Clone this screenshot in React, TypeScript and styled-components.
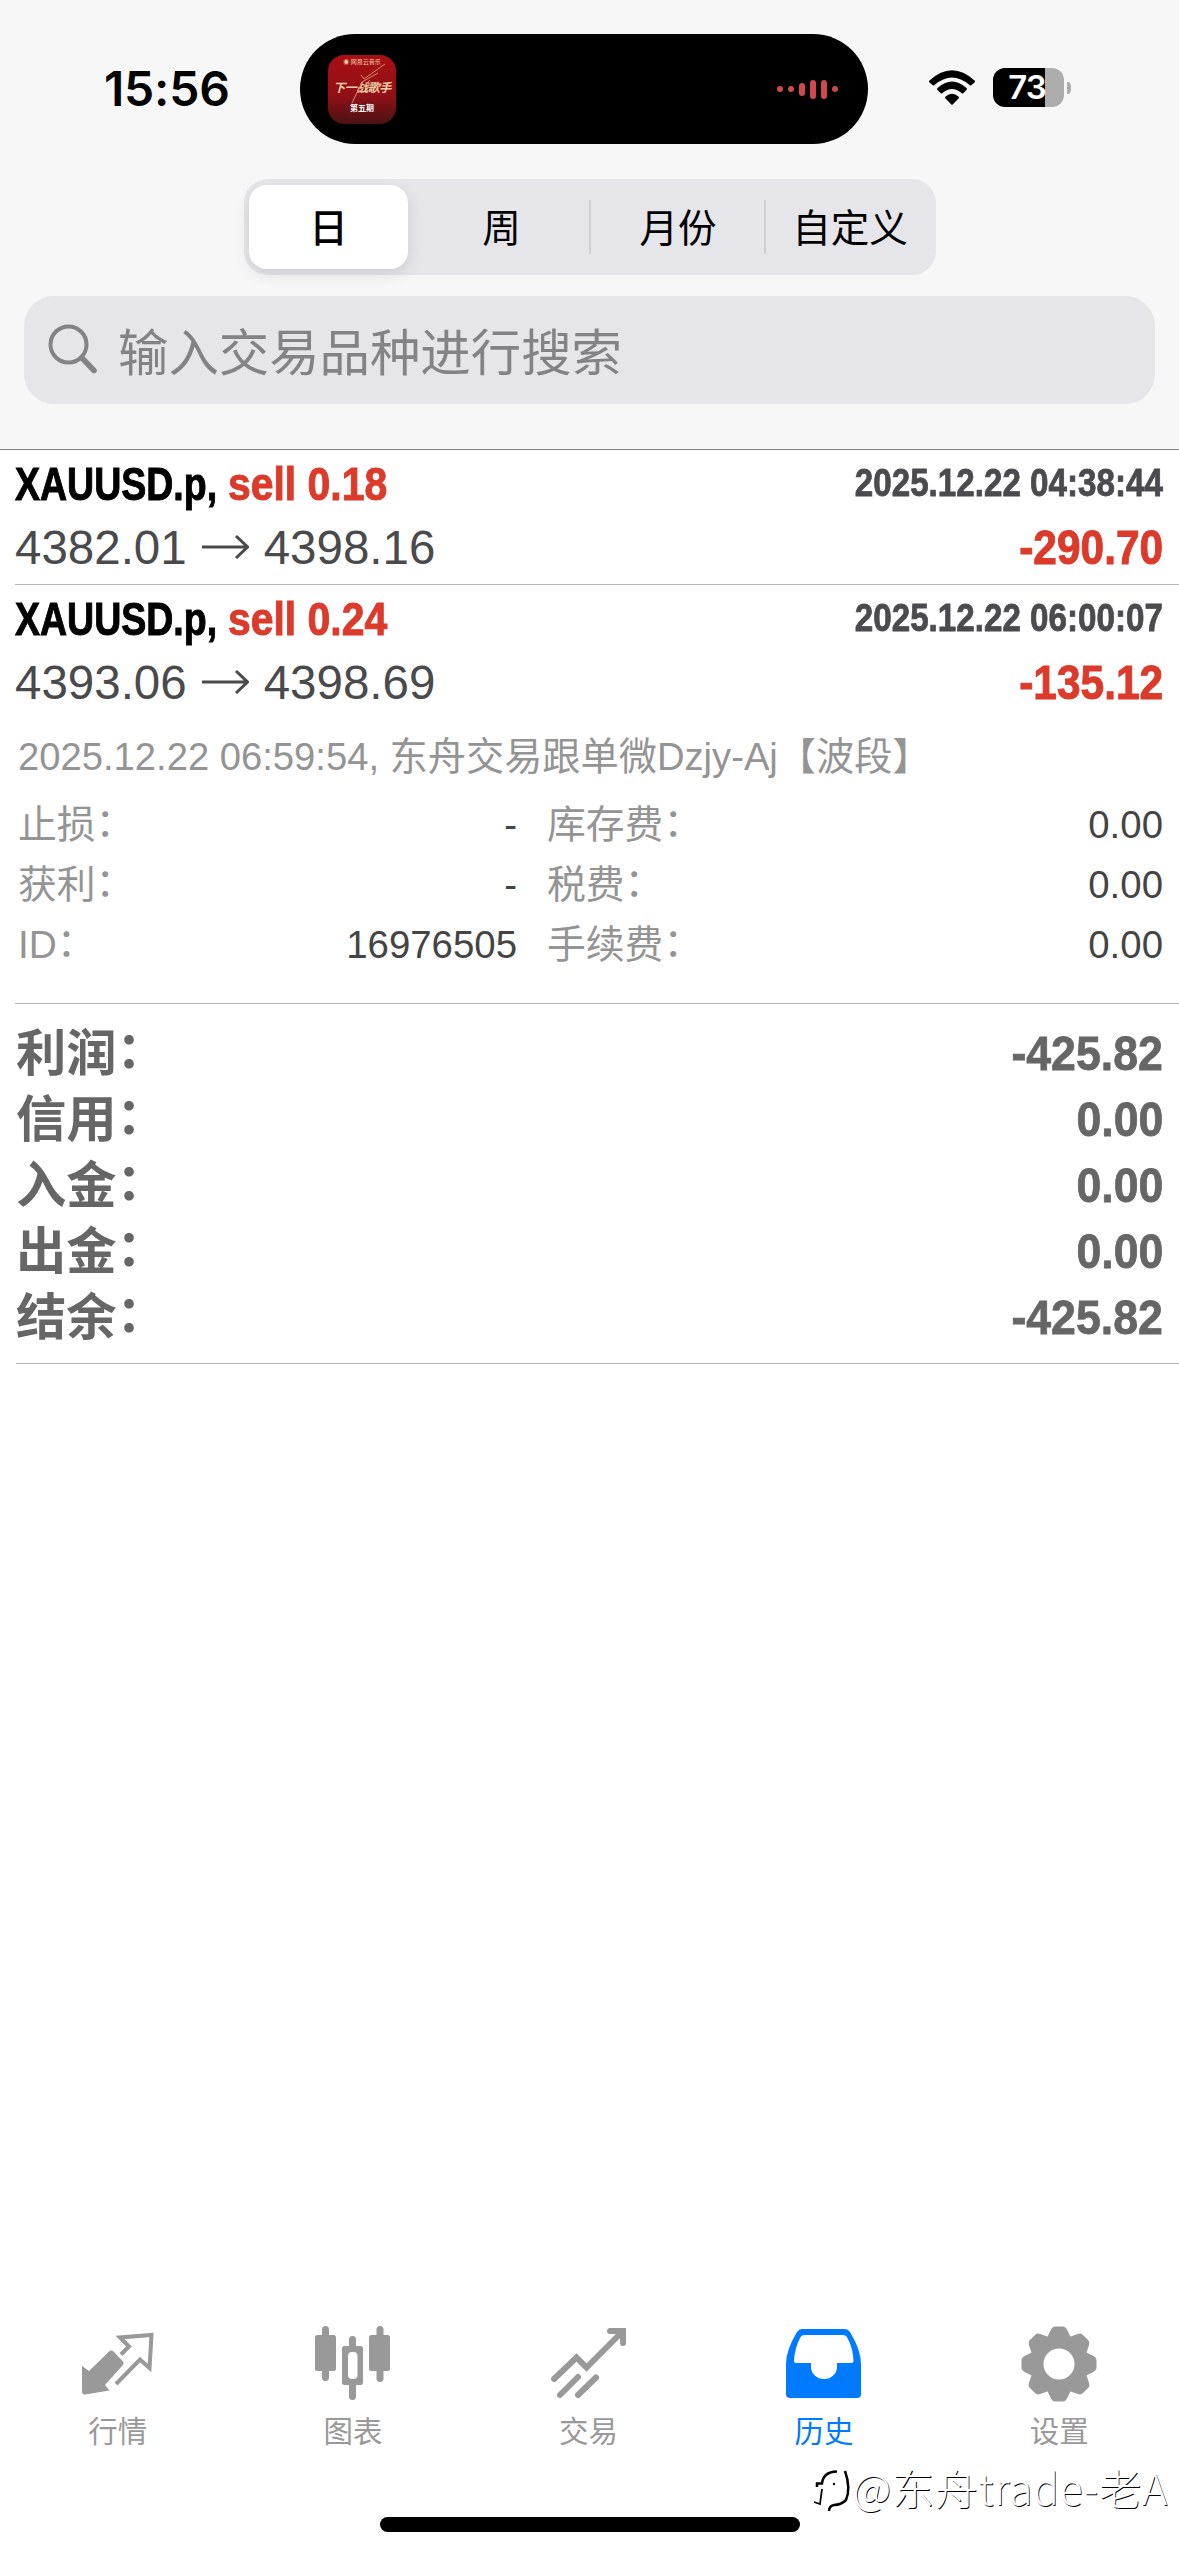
import React from "react";
import styled, { createGlobalStyle } from "styled-components";

const periods = ["日", "周", "月份", "自定义"];

const deals = [
  {
    symbol: "XAUUSD.p,",
    action: "sell 0.18",
    open: "4382.01",
    close: "4398.16",
    time: "2025.12.22 04:38:44",
    profit: "-290.70",
  },
  {
    symbol: "XAUUSD.p,",
    action: "sell 0.24",
    open: "4393.06",
    close: "4398.69",
    time: "2025.12.22 06:00:07",
    profit: "-135.12",
  },
];

const details = [
  ["止损", "-", "库存费", "0.00"],
  ["获利", "-", "税费", "0.00"],
  ["ID", "16976505", "手续费", "0.00"],
];

const totals = [
  ["利润", "-425.82"],
  ["信用", "0.00"],
  ["入金", "0.00"],
  ["出金", "0.00"],
  ["结余", "-425.82"],
];

const QuotesIcon = () => (
  <svg width="76" height="76" viewBox="0 0 76 76">
    <path
      d="M2 40 L9 45 L29 25.500 Q31.500 23.500 34 26 L42.500 35 Q44.500 37.500 42.500 39.500 L25 59 L29.500 64.500 L5 68.500 Q2 69 2 65 Z"
      fill="#999"
    />
    <path
      d="M41 28.500 L49 20.500 L40 11.500 L71.500 9 L69.500 42 L60 33.500 L36 58"
      fill="none"
      stroke="#999"
      strokeWidth="4"
    />
  </svg>
);

const ChartIcon = () => (
  <svg width="76" height="76" viewBox="0 0 76 76" fill="#999">
    <rect x="7" y="0" width="7" height="55" rx="3.5" />
    <rect x="0" y="9" width="21" height="36" rx="2.5" />
    <rect x="61.5" y="0" width="7" height="56" rx="3.5" />
    <rect x="54" y="9" width="21" height="36" rx="2.5" />
    <rect x="34" y="10" width="7" height="64" rx="3.5" />
    <rect x="27" y="20" width="21" height="39" rx="2.5" />
    <rect x="33" y="26" width="9.5" height="27" rx="4" fill="#fff" />
  </svg>
);

const TradeIcon = () => (
  <svg
    width="76"
    height="76"
    viewBox="0 0 76 76"
    fill="none"
    stroke="#999"
    strokeWidth="6"
    strokeLinecap="round"
  >
    <path d="M3 53 L25.500 31.500 L35.500 41.500 L71 6" />
    <path d="M59 5 H72 V17" />
    <path d="M9 69 L27 51 M27 69 L45 51.500" />
  </svg>
);

const HistoryIcon = () => (
  <svg width="76" height="76" viewBox="0 0 76 76">
    <path
      d="M16 3 H59 Q62 3 64 6 Q75 24 75 38 V68 Q75 72 71 72 H4 Q0 72 0 68 V38 Q0 24 11 6 Q13 3 16 3 Z"
      fill="#007aff"
    />
    <path
      d="M18 9 H57 Q60 9 61.500 12 Q67 22 67.500 35 Q67.500 37 65.500 37 H51 V41 A13 12 0 0 1 25 41 V37 H10 Q8 37 8 35 Q8.500 23 14 12 Q15.500 9 18 9 Z"
      fill="#fff"
    />
  </svg>
);

const SettingsIcon = () => (
  <svg width="76" height="76" viewBox="0 0 76 76" fill="#999">
    <mask id="hub">
      <rect width="76" height="76" fill="#fff" />
      <circle cx="38" cy="38" r="15.5" fill="#000" />
    </mask>
    <g mask="url(#hub)">
      <circle cx="38" cy="38" r="29.5" />
      {[0, 45, 90, 135, 180, 225, 270, 315].map((a) => (
        <path
          key={a}
          d="M25.500 13 L30 3.500 Q31.500 0.500 34 0.500 H42 Q44.500 0.500 46 3.500 L50.500 13 Z"
          transform={`rotate(${a} 38 38)`}
        />
      ))}
    </g>
  </svg>
);

const tabs = [
  { label: "行情", icon: <QuotesIcon /> },
  { label: "图表", icon: <ChartIcon /> },
  { label: "交易", icon: <TradeIcon /> },
  { label: "历史", icon: <HistoryIcon />, active: true },
  { label: "设置", icon: <SettingsIcon /> },
];

const App = () => {
  return (
    <Screen>
      <GlobalStyle />
      <Header>
        <StatusBar>
          <Clock>15:56</Clock>
          <Island>
            <Cover>
              <CoverBrand>◉ 网易云音乐</CoverBrand>
              <CoverTitle>下一战歌手</CoverTitle>
              <CoverSub>第五期</CoverSub>
              <CoverArt viewBox="0 0 68 70">
                <path d="M57 9 L36 24 L33 20 M50 18 L34 27 L24 48 M42 25 L30 38" />
              </CoverArt>
            </Cover>
            <Wave>
              {[6, 6, 13, 19, 19, 6].map((h, i) => (
                <WaveBar key={i} $height={h} />
              ))}
            </Wave>
          </Island>
          <Wifi width="48" height="37" viewBox="0 0 48 37">
            <path d="M1.500 11.500 Q24 -9 46.500 11.500 Q47.500 12.500 46.500 13.500 L43.500 16 Q42.500 17 41.500 16 Q24 1 6.500 16 Q5.500 17 4.500 16 L1.500 13.500 Q0.500 12.500 1.500 11.500 Z" />
            <path d="M9.500 19 Q24 6 38.500 19 Q39.500 20 38.500 21 L35.500 24 Q34.500 25 33.500 24 Q24 16 14.500 24 Q13.500 25 12.500 24 L9.500 21 Q8.500 20 9.500 19 Z" />
            <path d="M17.500 27.500 Q24 22 30.500 27.500 Q31.500 28.500 30.500 29.500 L24.700 35.500 Q24 36 23.300 35.500 L17.500 29.500 Q16.500 28.500 17.500 27.500 Z" />
          </Wifi>
          <Battery>73</Battery>
          <BatteryTip />
        </StatusBar>
        <Segments>
          {periods.map((p, i) => (
            <Segment key={p} $active={i === 0} $divider={i > 1}>
              {p}
            </Segment>
          ))}
        </Segments>
        <Search>
          <SearchIcon width="50" height="50" viewBox="0 0 50 50">
            <circle cx="20.5" cy="20.5" r="18" />
            <path d="M34 34 L46 46.500" strokeWidth="5.5" />
          </SearchIcon>
          输入交易品种进行搜索
        </Search>
      </Header>

      {deals.map((d, i) => (
        <Deal key={d.time} $last={i === deals.length - 1}>
          <Row>
            <Symbol $scale={0.798}>{d.symbol}</Symbol>
            <Action $scale={0.87}>{d.action}</Action>
            <Time>{d.time}</Time>
          </Row>
          <Row>
            <Price>
              {d.open}
              <Arrow width="47" height="26" viewBox="0 0 47 26">
                <path d="M0 13 H45 M34 2 L45.500 13 L34 24" />
              </Arrow>
              {d.close}
            </Price>
            <Profit>{d.profit}</Profit>
          </Row>
        </Deal>
      ))}

      <Details>
        <Comment>
          2025.12.22 06:59:54, 东舟交易跟单微Dzjy-Aj【波段】
        </Comment>
        {details.map(([a, b, c, d]) => (
          <DetailRow key={a}>
            <Label>
              {a}
              <Colon>：</Colon>
            </Label>
            <Value>{b}</Value>
            <Label>
              {c}
              <Colon>：</Colon>
            </Label>
            <Value>{d}</Value>
          </DetailRow>
        ))}
      </Details>

      <Totals>
        {totals.map(([label, value]) => (
          <TotalRow key={label}>
            <TotalLabel>
              {label}
              <Colon>：</Colon>
            </TotalLabel>
            <TotalValue>{value}</TotalValue>
          </TotalRow>
        ))}
      </Totals>

      <Spacer />

      <TabBar>
        {tabs.map((t) => (
          <Tab key={t.label} $active={t.active}>
            {t.icon}
            {t.label}
          </Tab>
        ))}
      </TabBar>
      <HomeBar />
      <Watermark>
        <WatermarkLogo width="44" height="48" viewBox="0 0 44 48">
          <path d="M5 19 V15.500 H10 Q11 4 25 3.500" strokeWidth="2.5" />
          <path d="M10 21 L8 36 L2 34" strokeWidth="1.8" />
          <path d="M33 3 Q39 20 34 32 Q29 37 22 37 Q17 38 17 43" strokeWidth="2.5" />
          <circle cx="22" cy="16" r="1.2" fill="#000" stroke="none" />
        </WatermarkLogo>
        <WatermarkText>@东舟trade-老A</WatermarkText>
      </Watermark>
    </Screen>
  );
};

export default App;

const GlobalStyle = createGlobalStyle`
  * {
    box-sizing: border-box;
  }
  body {
    margin: 0;
    background-color: #fff;
    font-family: "Liberation Sans", "Noto Sans CJK SC", sans-serif;
  }
  svg {
    flex-shrink: 0;
    display: block;
  }
`;

const Screen = styled.div`
  position: relative;
  width: 1179px;
  height: 2556px;
  display: flex;
  flex-direction: column;
  overflow: hidden;
`;

const Header = styled.div`
  height: 450px;
  flex-shrink: 0;
  background-color: #f7f7f7;
  border-bottom: 1px solid #808080;
  display: flex;
  flex-direction: column;
`;

const StatusBar = styled.div`
  height: 179px;
  padding: 34px 0 35px 104px;
  display: flex;
  align-items: center;
`;

const Clock = styled.div`
  width: 196px;
  padding-bottom: 2px;
  font-family: Inter, sans-serif;
  font-size: 48px;
  font-weight: 600;
  letter-spacing: -0.2px;
`;

const Island = styled.div`
  width: 568px;
  height: 110px;
  padding: 0 30px 0 28px;
  border-radius: 55px;
  background-color: #000;
  display: flex;
  align-items: center;
  justify-content: space-between;
`;

const Cover = styled.div`
  position: relative;
  width: 68px;
  height: 69px;
  padding-top: 4px;
  border-radius: 16px;
  background: linear-gradient(#a80f14, #8f1015 60%, #4a1214);
  color: #f0cfa8;
  display: flex;
  flex-direction: column;
  align-items: center;
  white-space: nowrap;
  line-height: 1;
`;

const CoverBrand = styled.div`
  font-size: 6px;
`;

const CoverTitle = styled.div`
  margin-top: 17px;
  font-size: 12px;
  font-weight: 700;
  font-style: italic;
  letter-spacing: -0.5px;
`;

const CoverSub = styled.div`
  margin-top: 11px;
  font-size: 8px;
  font-weight: 700;
  color: #fff;
`;

const CoverArt = styled.svg`
  position: absolute;
  inset: 0;
  fill: none;
  stroke: #d98a6c;
  stroke-width: 1;
`;

const Wave = styled.div`
  display: flex;
  align-items: center;
  gap: 5px;
`;

const WaveBar = styled.div<{ $height: number }>`
  width: 6px;
  height: ${(p) => p.$height}px;
  border-radius: 3px;
  background-color: #d0494c;
`;

const Wifi = styled.svg`
  margin-left: 60px;
  margin-bottom: 3px;
`;

const Battery = styled.div`
  width: 71px;
  height: 39px;
  margin: 0 0 3px 17px;
  padding-right: 3px;
  border-radius: 12px;
  background: linear-gradient(to right, #000 52px, #adadad 52px);
  color: #fff;
  font-family: Inter, sans-serif;
  font-size: 33px;
  font-weight: 600;
  line-height: 39px;
  letter-spacing: -1px;
  text-align: center;
`;

const BatteryTip = styled.div`
  width: 4px;
  height: 12px;
  margin: 0 0 3px 3px;
  border-radius: 0 4px 4px 0;
  background-color: #adadad;
`;

const Segments = styled.div`
  width: 692px;
  height: 96px;
  margin-left: 244px;
  padding: 6px 3px 6px 5px;
  border-radius: 24px;
  background-color: #e5e5ea;
  display: grid;
  grid-template-columns: 159px 181px 175px 1fr;
`;

const Segment = styled.div<{ $active?: boolean; $divider?: boolean }>`
  padding-bottom: 5px;
  padding-left: ${(p) => (p.$active ? 0 : p.$divider ? 3 : 6)}px;
  border-radius: ${(p) => (p.$active ? 18 : 0)}px;
  background-color: ${(p) => (p.$active ? "#fff" : "transparent")};
  box-shadow: ${(p) => (p.$active ? "0 6px 16px rgba(0, 0, 0, 0.1)" : "none")};
  background-image: ${(p) =>
    p.$divider ? "linear-gradient(#cfcfd4, #cfcfd4)" : "none"};
  background-size: 2px 54px;
  background-position: left center;
  background-repeat: no-repeat;
  display: flex;
  align-items: center;
  justify-content: center;
  font-size: 38.6px;
  font-weight: ${(p) => (p.$active ? 500 : 400)};
`;

const Search = styled.div`
  height: 108px;
  margin: 21px 24px 0 24px;
  padding: 0 0 2px 24px;
  border-radius: 30px;
  background-color: #e5e5ea;
  color: #838287;
  display: flex;
  align-items: center;
  gap: 20px;
  font-size: 50.4px;
`;

const SearchIcon = styled.svg`
  fill: none;
  stroke: #838287;
  stroke-width: 4;
  stroke-linecap: round;
`;

const Deal = styled.div<{ $last: boolean }>`
  height: 135px;
  flex-shrink: 0;
  margin-left: 15px;
  padding: 1px 16px 0 0;
  border-bottom: 1px solid ${(p) => (p.$last ? "transparent" : "#b5b5b5")};
`;

const Row = styled.div`
  height: 64px;
  display: flex;
  align-items: center;
`;

/* bold text narrowed to the width of a condensed face */
const Condensed = styled.span<{ $scale: number }>`
  transform: scaleX(${(p) => p.$scale});
  transform-origin: left center;
  width: 213px;
  white-space: nowrap;
  font-size: 47px;
  font-weight: 700;
  -webkit-text-stroke: 1px currentColor;
`;

const Symbol = styled(Condensed)`
  color: #000;
`;

const Action = styled(Condensed)`
  color: #dc3a2b;
`;

const Time = styled.span`
  margin-left: auto;
  transform: scaleX(0.873);
  transform-origin: right center;
  white-space: nowrap;
  font-size: 38px;
  font-weight: 700;
  -webkit-text-stroke: 0.8px currentColor;
  color: #4a4a4f;
`;

const Price = styled.div`
  display: flex;
  align-items: center;
  gap: 15px;
  font-size: 47.5px;
  color: #4a4a4d;
`;

const Arrow = styled.svg`
  fill: none;
  stroke: #4a4a4d;
  stroke-width: 3;
`;

const Profit = styled.span`
  margin-left: auto;
  transform: scaleX(0.893);
  transform-origin: right center;
  font-size: 47.5px;
  font-weight: 700;
  -webkit-text-stroke: 1px currentColor;
  color: #dc3a2b;
`;

const Details = styled.div`
  height: 284px;
  flex-shrink: 0;
  margin-left: 15px;
  padding: 2px 16px 0 3px;
  border-bottom: 1px solid #b5b5b5;
  font-size: 38.4px;
`;

const Comment = styled.div`
  height: 73px;
  font-size: 38.2px;
  line-height: 70px;
  white-space: nowrap;
  color: #949494;
`;

const DetailRow = styled.div`
  height: 60px;
  display: grid;
  grid-template-columns: 130px 369px 160px 1fr;
  align-items: center;
`;

const Label = styled.span`
  font-size: 38.8px;
  line-height: 54px;
  white-space: nowrap;
  color: #949494;
  &:nth-child(3) {
    padding-left: 30px;
  }
`;

const Colon = styled.span`
  vertical-align: 0.06em;
  line-height: 1;
`;

const Value = styled.span`
  text-align: right;
  color: #444;
`;

const Totals = styled.div`
  height: 360px;
  flex-shrink: 0;
  margin-left: 16px;
  padding: 16px 16px 0 0;
  border-bottom: 1px solid #b5b5b5;
`;

const TotalRow = styled.div`
  height: 66px;
  display: flex;
  align-items: center;
  justify-content: space-between;
  font-size: 50.3px;
  font-weight: 700;
  color: #666;
`;

const TotalLabel = styled.span`
  padding-top: 2px;
  line-height: 60px;
`;

const TotalValue = styled.span`
  transform: scaleX(0.93);
  transform-origin: right center;
  font-size: 48px;
  -webkit-text-stroke: 0.8px currentColor;
`;

const Spacer = styled.div`
  flex: 1;
`;

const TabBar = styled.div`
  height: 191px;
  flex-shrink: 0;
  margin-right: 2px;
  display: flex;
`;

const Tab = styled.div<{ $active?: boolean }>`
  flex: 1;
  display: flex;
  flex-direction: column;
  align-items: center;
  gap: 10px;
  font-size: 29.5px;
  line-height: 40px;
  color: ${(p) => (p.$active ? "#007aff" : "#999")};
`;

const HomeBar = styled.div`
  width: 420px;
  height: 15px;
  flex-shrink: 0;
  margin: 0 auto 24px;
  border-radius: 8px;
  background-color: #000;
`;

const Watermark = styled.div`
  position: absolute;
  right: 11px;
  bottom: 37px;
  display: flex;
  align-items: center;
`;

const WatermarkLogo = styled.svg`
  margin: 9px -4px 0 0;
  fill: none;
  stroke: #000;
`;

const WatermarkText = styled.span`
  font-family: "Noto Sans CJK SC", sans-serif;
  font-size: 42.5px;
  font-weight: 300;
  line-height: 64px;
  letter-spacing: 0.8px;
  color: #fff;
  text-shadow: 0.8px 0.8px 0.6px #000;
`;
